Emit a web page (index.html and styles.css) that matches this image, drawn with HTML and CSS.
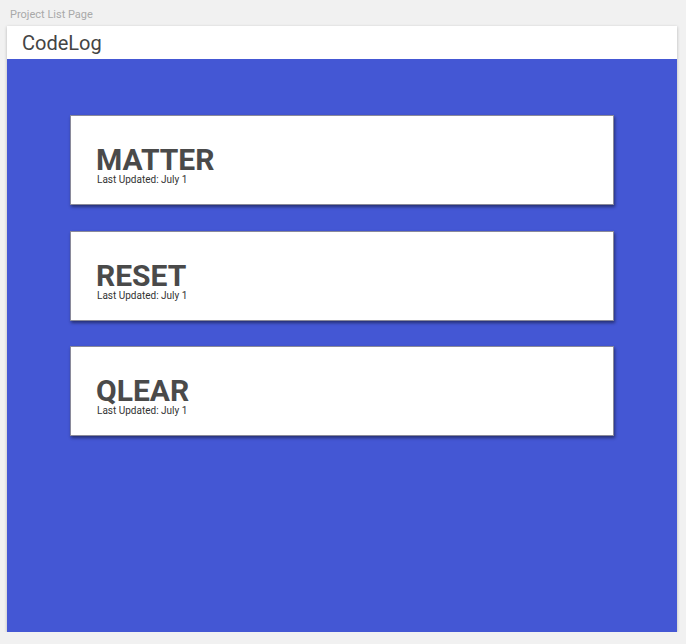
FILE: index.html
```html
<!DOCTYPE html>
<html>
<head>
<meta charset="utf-8">
<link rel="stylesheet" href="styles.css">
</head>
<body>
<div class="page-label">Project List Page</div>
<div class="frame">
  <header class="topbar">CodeLog</header>
  <main class="content">
    <div class="card">
      <div class="card-title">MATTER</div>
      <div class="card-sub">Last Updated: July 1</div>
    </div>
    <div class="card">
      <div class="card-title">RESET</div>
      <div class="card-sub">Last Updated: July 1</div>
    </div>
    <div class="card">
      <div class="card-title">QLEAR</div>
      <div class="card-sub">Last Updated: July 1</div>
    </div>
  </main>
</div>
</body>
</html>
```
FILE: styles.css
```css
html, body {
  margin: 0;
  padding: 0;
  background: #f1f1f1;
  font-family: Roboto, "Liberation Sans", sans-serif;
}
.page-label {
  height: 26px;
  line-height: 30px;
  padding-left: 10px;
  font-size: 11px;
  color: #a9a9a9;
}
.frame {
  margin-left: 7px;
  width: 670px;
  height: 606px;
  display: flex;
  flex-direction: column;
  box-shadow: 0 1px 3px rgba(0,0,0,0.25);
}
.topbar {
  height: 33px;
  background: #fff;
  color: #444;
  font-size: 20px;
  line-height: 34px;
  padding-left: 15px;
}
.content {
  flex: 1;
  background: #4457d4;
  padding: 56px 63px 0 63px;
  display: flex;
  flex-direction: column;
  gap: 25.5px;
}
.card {
  background: #fff;
  border: 1px solid #8a8a9a;
  box-shadow: 1px 2px 3px rgba(0,0,0,0.45);
  padding: 30px 25px 0 25px;
  display: flex;
  flex-direction: column;
  box-sizing: border-box;
  height: 90px;
}
.card-title {
  font-size: 30px;
  font-weight: bold;
  color: #4a4a4a;
  line-height: 28px;
}
.card-sub {
  font-size: 10px;
  color: #333;
  line-height: 12px;
  padding-left: 1px;
}
```
